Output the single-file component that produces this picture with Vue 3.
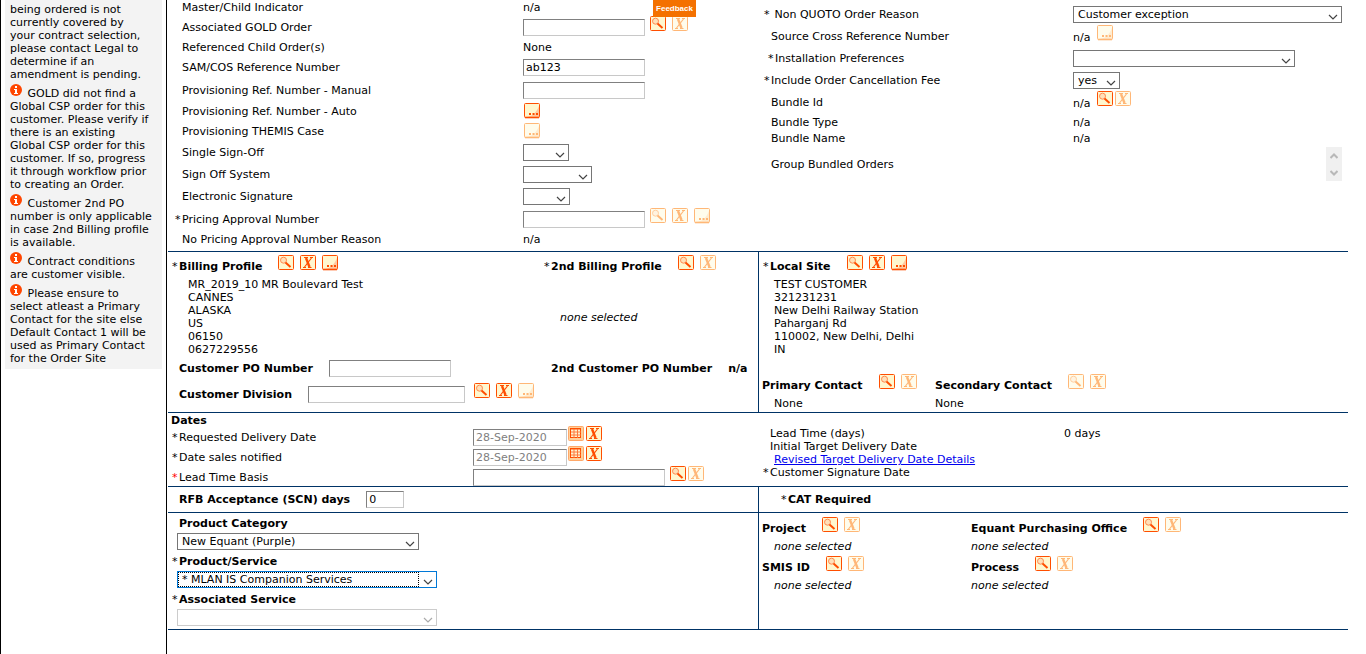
<script setup>
import { h } from 'vue'

const notes = [
  'GOLD did not find a\nGlobal CSP order for this\ncustomer. Please verify if\nthere is an existing\nGlobal CSP order for this\ncustomer. If so, progress\nit through workflow prior\nto creating an Order.',
  'Customer 2nd PO\nnumber is only applicable\nin case 2nd Billing profile\nis available.',
  'Contract conditions\nare customer visible.',
  'Please ensure to\nselect atleast a Primary\nContact for the site else\nDefault Contact 1 will be\nused as Primary Contact\nfor the Order Site',
]
const firstNote = 'being ordered is not\ncurrently covered by\nyour contract selection,\nplease contact Legal to\ndetermine if an\namendment is pending.'

const billing = ['MR_2019_10 MR Boulevard Test', 'CANNES', 'ALASKA', 'US', '06150', '0627229556']
const site = ['TEST CUSTOMER', '321231231', 'New Delhi Railway Station', 'Paharganj Rd', '110002, New Delhi, Delhi', 'IN']

const titles = { search: 'Search', clear: 'Clear', more: 'Details', calendar: 'Calendar' }

// list: space-separated icon names, a trailing "!" marks a disabled one
const Tools = (props) =>
  h('span', { class: 'tools' }, props.list.split(' ').map((entry) => {
    const name = entry.replace('!', '')
    return h('button', { type: 'button', disabled: entry.endsWith('!'), 'aria-label': titles[name] + ' ' + props.of },
      [h('svg', { width: 16, height: 16, viewBox: '0 0 16 16' }, [h('use', { href: '#i-' + name })])])
  }))
Tools.props = ['list', 'of']

const Pick = (props) =>
  h('span', { class: 'pick' }, [
    h('select', { id: props.id, disabled: props.off }, [h('option', props.text || '')]),
    h('svg', { width: 10, height: 6, viewBox: '0 0 10 6' }, [h('path', { d: 'M1 1l4 4 4-4', fill: 'none', stroke: 'currentColor', 'stroke-width': 1.2 })]),
  ])
Pick.props = ['id', 'text', 'off']
</script>

<template>
  <svg class="defs" aria-hidden="true">
    <symbol id="i-search" viewBox="0 0 16 16">
      <rect class="paper" x="0.5" y="0.5" width="15" height="14" rx="1" stroke="currentColor" />
      <circle class="lens" cx="5.5" cy="5.2" r="3" />
      <path d="M7.500 7.500l5 4.500" stroke="currentColor" stroke-width="2" />
    </symbol>
    <symbol id="i-clear" viewBox="0 0 16 16">
      <rect class="paper" x="0.5" y="0.5" width="15" height="14" rx="1" stroke="currentColor" />
      <path d="M6 3l3.500 9" stroke="currentColor" stroke-width="2.4" />
      <path d="M11.500 3L4.500 12M4 2.500h4M10 2.500h3M3 12.500h3M8 12.500h3.500" stroke="currentColor" stroke-width="1.2" />
    </symbol>
    <symbol id="i-more" viewBox="0 0 16 16">
      <rect class="paper" x="0.5" y="0.5" width="15" height="14" rx="1" stroke="currentColor" />
      <path class="shade" d="M15 3v11H3c6-1 9-4 12-11z" />
      <path d="M1 14.500h14" stroke="currentColor" stroke-width="1.600" />
      <path d="M5 11h2M8.500 11h2M12 11h2" stroke="currentColor" stroke-width="2" />
    </symbol>
    <symbol id="i-calendar" viewBox="0 0 16 16">
      <rect x="0.5" y="0.5" width="15" height="14" rx="1" fill="#ffd09a" stroke="#ffa868" />
      <rect x="2.500" y="2.500" width="10" height="9" fill="#fff3d0" stroke="#ff4e00" />
      <path d="M2 3h11" stroke="#ff4e00" />
      <path d="M6 3v9M9.500 3v9M3 6h10M3 9h10" stroke="#ff7a3c" />
    </symbol>
    <symbol id="i-info" viewBox="0 0 12 12">
      <circle cx="6" cy="6" r="6" fill="#ff4600" />
      <path d="M5 2h2v2H5zM4 5h3v4h1v1H4V9h1V6H4z" fill="#fff" />
    </symbol>
  </svg>

  <div class="page">
    <a class="feedback" href="#">Feedback</a>

    <aside class="side">
      <div class="notes">
        <p>{{ firstNote }}</p>
        <p v-for="note in notes" :key="note"><svg class="info" width="12" height="12"><use href="#i-info" /></svg> {{ note }}</p>
      </div>
    </aside>

    <main class="main">
      <section class="band">
        <div class="half">
          <div class="row h14"><span class="name">Master/Child Indicator</span><span>n/a</span></div>
          <div class="row h26"><label class="name" for="gold">Associated GOLD Order</label><input id="gold" class="mid"><Tools list="search clear!" of="GOLD order" /></div>
          <div class="row h14"><span class="name">Referenced Child Order(s)</span><span>None</span></div>
          <div class="row h26"><label class="name" for="sam">SAM/COS Reference Number</label><input id="sam" class="mid" value="ab123"></div>
          <div class="row h20"><label class="name" for="prov">Provisioning Ref. Number - Manual</label><input id="prov" class="mid"></div>
          <div class="row h22"><span class="name">Provisioning Ref. Number - Auto</span><Tools class="lead" list="more" of="provisioning" /></div>
          <div class="row h18"><span class="name">Provisioning THEMIS Case</span><Tools class="lead" list="more!" of="THEMIS case" /></div>
          <div class="row h24"><label class="name" for="sso">Single Sign-Off</label><Pick id="sso" class="w46" /></div>
          <div class="row h20"><label class="name" for="sos">Sign Off System</label><Pick id="sos" class="w69" /></div>
          <div class="row h24"><label class="name" for="sig">Electronic Signature</label><Pick id="sig" class="w47" /></div>
          <div class="row h22"><label class="name" for="price"><i class="star">*</i>Pricing Approval Number</label><input id="price" class="mid"><Tools list="search! clear! more!" of="pricing approval" /></div>
          <div class="row h18"><span class="name">No Pricing Approval Number Reason</span><span>n/a</span></div>
        </div>
        <div class="half second">
          <div class="row h22"><label class="name" for="quoto"><i class="star">*</i> Non QUOTO Order Reason</label><Pick id="quoto" class="grow" text="Customer exception" /></div>
          <div class="row h22"><span class="name">Source Cross Reference Number</span><span class="low">n/a</span><Tools list="more!" of="cross reference" /></div>
          <div class="row h22"><label class="name indented" for="inst"><i class="star">*</i>Installation Preferences</label><Pick id="inst" class="w222" /></div>
          <div class="row h22"><label class="name" for="fee"><i class="star">*</i>Include Order Cancellation Fee</label><Pick id="fee" class="w47" text="yes" /></div>
          <div class="row h22"><span class="name">Bundle Id</span><span class="low">n/a</span><Tools class="tight" list="search clear!" of="bundle" /></div>
          <div class="row h18"><span class="name">Bundle Type</span><span>n/a</span></div>
          <div class="row h14"><span class="name">Bundle Name</span><span>n/a</span></div>
          <div class="row tall">
            <span class="name">Group Bundled Orders</span>
            <span class="scroller">
              <svg width="8" height="6" viewBox="0 0 8 6"><path d="M0.500 5L4 1.500 7.500 5" /></svg>
              <svg width="8" height="6" viewBox="0 0 8 6"><path d="M0.500 1L4 4.500 7.500 1" /></svg>
            </span>
          </div>
        </div>
      </section>

      <section class="band ruled">
        <div class="half">
          <div class="profiles">
            <div>
              <h2 class="head"><i class="star">*</i>Billing Profile<Tools list="search clear more" of="billing profile" /></h2>
              <ul class="address"><li v-for="l in billing" :key="l">{{ l }}</li></ul>
            </div>
            <div>
              <h2 class="head"><i class="star">*</i>2nd Billing Profile<Tools list="search clear!" of="2nd billing profile" /></h2>
              <p class="none centred">none selected</p>
            </div>
          </div>
          <div class="profiles">
            <div class="line h24"><label for="po">Customer PO Number</label><input id="po" class="mid"></div>
            <div class="line h24"><span>2nd Customer PO Number</span><span class="value">n/a</span></div>
          </div>
          <div class="line division"><label for="div">Customer Division</label><input id="div" class="wide"><Tools list="search clear more!" of="customer division" /></div>
        </div>
        <div class="half divided">
          <h2 class="head"><i class="star">*</i>Local Site<Tools list="search clear more" of="local site" /></h2>
          <ul class="address site"><li v-for="l in site" :key="l">{{ l }}</li></ul>
          <div class="contacts">
            <div><h2 class="head">Primary Contact<Tools list="search clear!" of="primary contact" /></h2><p class="inset">None</p></div>
            <div><h2 class="head">Secondary Contact<Tools list="search! clear!" of="secondary contact" /></h2><p>None</p></div>
          </div>
        </div>
      </section>

      <section class="ruled">
        <h2 class="dates">Dates</h2>
        <div class="band">
          <div class="half when">
            <div class="row h20"><label class="name" for="rdd"><i class="star">*</i>Requested Delivery Date</label><input id="rdd" class="date" value="28-Sep-2020" disabled><Tools class="tight near" list="calendar clear" of="delivery date" /></div>
            <div class="row h20"><label class="name" for="dsn"><i class="star">*</i>Date sales notified</label><input id="dsn" class="date" value="28-Sep-2020" disabled><Tools class="tight near" list="calendar clear" of="notified date" /></div>
            <div class="row h20"><label class="name" for="ltb"><i class="star red">*</i>Lead Time Basis</label><input id="ltb" class="basis"><Tools class="tight" list="search clear!" of="lead time basis" /></div>
          </div>
          <div class="half targets">
            <div class="pair"><span>Lead Time (days)</span><span>0 days</span></div>
            <div>Initial Target Delivery Date</div>
            <div class="linked"><a href="#">Revised Target Delivery Date Details</a></div>
            <div><i class="star">*</i>Customer Signature Date</div>
          </div>
        </div>
      </section>

      <section class="band ruled">
        <div class="half line rfb"><label for="rfb">RFB Acceptance (SCN) days</label><input id="rfb" class="tiny" value="0"></div>
        <div class="half line divided cat"><span><i class="star">*</i>CAT Required</span></div>
      </section>

      <section class="band ruled last">
        <div class="half product">
          <label for="cat">Product Category</label>
          <Pick id="cat" class="w242" text="New Equant (Purple)" />
          <label for="svc"><i class="star">*</i>Product/Service</label>
          <Pick id="svc" class="w260 active" text="* MLAN IS Companion Services" />
          <label for="assoc"><i class="star">*</i>Associated Service</label>
          <Pick id="assoc" class="w260" off />
        </div>
        <div class="half divided offices">
          <div><h2 class="head">Project<Tools list="search clear!" of="project" /></h2><p class="none inset">none selected</p></div>
          <div><h2 class="head">Equant Purchasing Office<Tools list="search clear!" of="purchasing office" /></h2><p class="none">none selected</p></div>
          <div><h2 class="head">SMIS ID<Tools list="search clear!" of="SMIS ID" /></h2><p class="none inset">none selected</p></div>
          <div><h2 class="head">Process<Tools list="search clear!" of="process" /></h2><p class="none">none selected</p></div>
        </div>
      </section>
    </main>
  </div>
</template>

<style>
body { background: #fff; }
.tools { display: flex; gap: 6px; margin: 0 0 6px 5px; flex: none; }
.tools button { display: block; width: 16px; height: 16px; padding: 0; border: 0; background: none; color: #ff4e00; --paper: #fff7cf; --shade: #ffc9a0; --lens: #ff8a50; --glass: #ffe0b8; }
.tools button:disabled { color: #ffb777; --paper: #fffcec; --shade: #ffecd0; --lens: #ffcfa0; --glass: #fff3e0; }
.tools svg { display: block; }
.paper { fill: var(--paper); }
.shade { fill: var(--shade); }
.lens { fill: var(--glass); stroke: var(--lens); }
.pick { position: relative; display: block; flex: none; color: #444; }
.pick select { display: block; width: 100%; height: 17px; box-sizing: border-box; margin: 0; padding: 0 4px; border: 1px solid #767676; border-radius: 0; background: #fff; color: #000; font: inherit; appearance: none; outline: 0; }
.pick svg { position: absolute; right: 4px; bottom: 3px; pointer-events: none; }
.pick select:disabled { border-color: #ccc; opacity: 1; }
.pick select:disabled + svg { color: #aaa; }
</style>

<style scoped>
.defs { position: absolute; width: 0; height: 0; }
.page { position: relative; display: flex; min-height: 100vh; box-sizing: border-box; border-left: 1px solid #000; padding-right: 18px; font: 11px/13px "DejaVu Sans", Verdana, sans-serif; color: #000; overflow: hidden; }
.feedback { position: absolute; left: 652px; top: 0; width: 43px; height: 17px; background: #f47100; color: #fff; font: bold 8px/17px "Liberation Sans", Arial, sans-serif; text-align: center; text-decoration: none; z-index: 1; }
h2, p, ul { margin: 0; padding: 0; font: inherit; list-style: none; }
.star { font-style: normal; font-weight: normal; display: inline-block; width: 7px; margin-left: -7px; }
.red { color: #f00; }
.side { flex: none; width: 161px; padding-left: 4px; border-right: 1px solid #000; }
.notes { width: 147px; padding: 3px 5px 4px; background: #f3f3f3; white-space: pre-line; }
.notes p + p { margin-top: 6px; }
.info { margin-top: -6px; vertical-align: 1px; margin-right: 2px; }
.main { flex: 1; min-width: 0; padding-left: 1px; }
.band { display: grid; grid-template-columns: minmax(0, 1fr) minmax(0, 1fr); }
.half { min-width: 0; box-sizing: border-box; }
.ruled { border-top: 1px solid #036; }
.last { border-bottom: 1px solid #036; }
.divided { border-left: 1px solid #036; }
.row { display: flex; align-items: center; }
.name { flex: none; width: 355px; box-sizing: border-box; padding-left: 14px; }
.second { padding: 3px 6px 0 0; }
.second .name { width: 315px; padding-left: 13px; }
.second .indented { padding-left: 17px; }
.h14 { height: 14px; }
.h18 { height: 18px; }
.h20 { height: 20px; }
.h22 { height: 22px; }
.h24 { height: 24px; }
.h26 { height: 26px; }
.half > .row:last-child { margin-bottom: 3px; }
.tall { height: 38px; }
.low { padding: 3px 2px 0 0; }
.tools.lead { margin: 0 0 0 1px; }
.tools.tight { gap: 2px; }
.tools.near { margin-left: 1px; }
input { flex: none; box-sizing: border-box; height: 17px; margin: 0; padding: 0 2px; border: 1px solid; border-color: #808080 #c8c8c8 #c8c8c8 #808080; border-radius: 0; background: #fff; color: #000; font: inherit; outline: 0; }
input:disabled { color: #808080; }
.mid { width: 122px; }
.wide { width: 157px; }
.date { width: 94px; }
.basis { width: 192px; }
.tiny { width: 38px; }
.w46 { width: 46px; }
.w47 { width: 47px; }
.w69 { width: 69px; }
.w222 { width: 222px; }
.w242 { width: 242px; }
.w260 { width: 260px; }
.grow { flex: 1; }
.scroller { display: flex; flex-direction: column; justify-content: space-between; align-items: center; width: 16px; height: 34px; box-sizing: border-box; padding: 6px 0 5px; margin-left: auto; background: #f0f0f0; }
.scroller path { fill: none; stroke: #b8b8b8; stroke-width: 2; }
.profiles { display: grid; grid-template-columns: 1fr 215px; }
.profiles > :last-child { padding-left: 8px; }
.profiles > :first-child { padding-left: 11px; }
.head { display: flex; align-items: center; height: 26px; font-weight: bold; padding-top: 2px; box-sizing: border-box; }
.head .tools { margin-left: 16px; }
.address { padding-left: 9px; }
.centred { padding: 33px 0 0 9px; }
.none { font-style: italic; }
.line { display: flex; align-items: center; font-weight: bold; }
.division { height: 28px; padding-left: 11px; }
.line input { margin-left: 16px; font-weight: normal; }
.line .tools { margin-left: 9px; }
.value { margin-left: 16px; }
.divided > .head { padding-left: 11px; }
.site { padding-left: 15px; }
.contacts { display: grid; grid-template-columns: 173px 1fr; padding: 15px 0 2px 3px; }
.inset { padding-left: 12px; }
.dates { font-weight: bold; padding: 1px 0 0 3px; }
.when .name { width: 305px; padding-left: 11px; }
.when > .row:last-child { margin-bottom: -1px; }
.targets { padding-left: 12px; }
.pair { display: grid; grid-template-columns: 294px 1fr; }
.linked { padding-left: 4px; }
a { color: #00e; }
.rfb, .cat { height: 25px; }
.rfb { padding-left: 11px; }
.cat { padding-left: 29px; }
.product { padding: 4px 0 3px 9px; font-weight: bold; }
.product label { display: block; padding: 0 0 3px 2px; }
.product .pick { margin-bottom: 5px; font-weight: normal; }
.product .pick:last-child { margin-bottom: 0; }
.active::before { content: ""; position: absolute; left: 1px; top: 1px; bottom: 1px; right: 18px; border: 1px dotted #000; pointer-events: none; }
.active { outline: 1px solid #0078d7; outline-offset: -1px; }
.offices { display: grid; grid-template-columns: 209px 1fr; align-content: start; padding: 1px 0 0 3px; }
</style>
